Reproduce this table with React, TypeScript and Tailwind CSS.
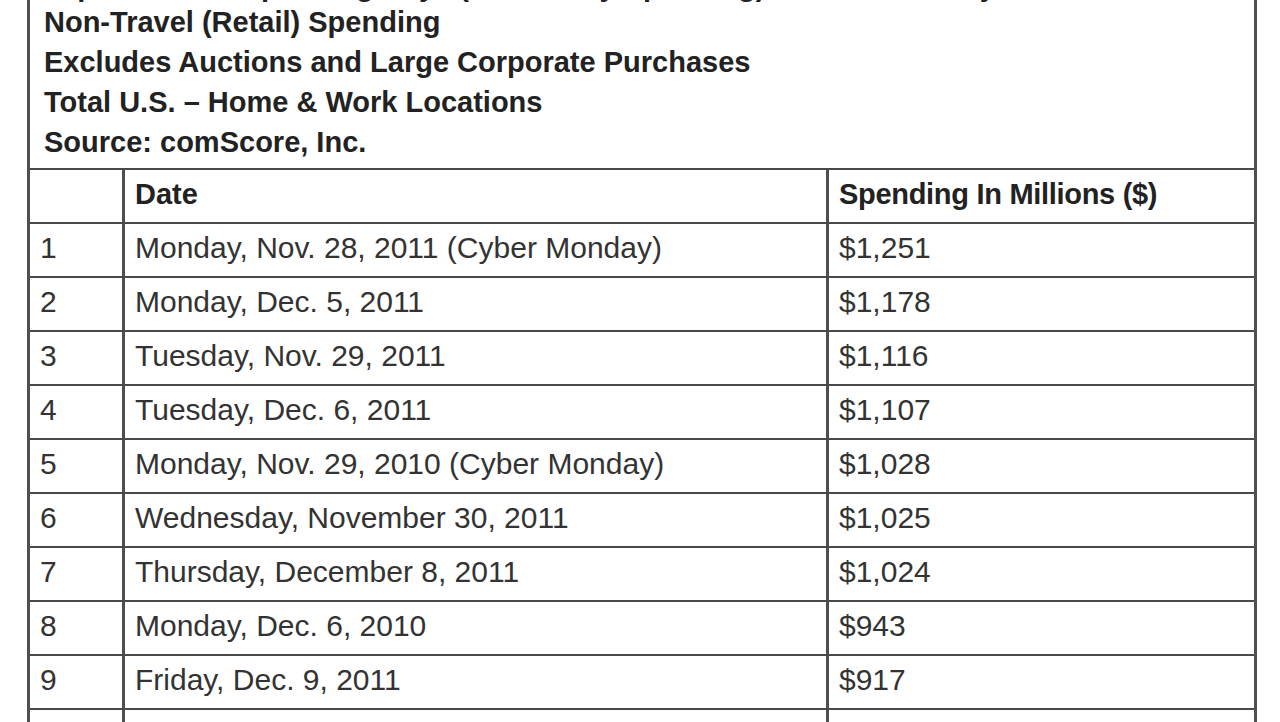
const notes = [
  "Non-Travel (Retail) Spending",
  "Excludes Auctions and Large Corporate Purchases",
  "Total U.S. – Home & Work Locations",
  "Source: comScore, Inc.",
];

const rows = [
  ["1", "Monday, Nov. 28, 2011 (Cyber Monday)", "$1,251"],
  ["2", "Monday, Dec. 5, 2011", "$1,178"],
  ["3", "Tuesday, Nov. 29, 2011", "$1,116"],
  ["4", "Tuesday, Dec. 6, 2011", "$1,107"],
  ["5", "Monday, Nov. 29, 2010 (Cyber Monday)", "$1,028"],
  ["6", "Wednesday, November 30, 2011", "$1,025"],
  ["7", "Thursday, December 8, 2011", "$1,024"],
  ["8", "Monday, Dec. 6, 2010", "$943"],
  ["9", "Friday, Dec. 9, 2011", "$917"],
  ["10", "Thursday, Dec. 1, 2011", "$912"],
];

export default function App() {
  return (
    <div
      className="h-[722px] overflow-hidden bg-white text-[#2a2a2a]"
      style={{ fontFamily: '"Liberation Sans", Arial, sans-serif' }}
    >
      <div className="ml-[27px] w-[1230px] border-x-[3px] border-[#505050]">
        {/* Heading block, first line cut off by the top edge */}
        <div className="pb-[6px] pl-[14px] text-[29px] font-bold text-[#222]">
          <div className="-mt-[28px] whitespace-nowrap leading-[28px]">
            Top 10 Online Spending Days (Ranked by Spending) for 2011 Holiday Season
          </div>
          <div className="mt-[2px] leading-[40px]">
            {notes.map((n) => (
              <div key={n} className="whitespace-nowrap">
                {n}
              </div>
            ))}
          </div>
        </div>

        {/* Table */}
        <div className="grid h-[54px] grid-cols-[92px_704px_1fr] border-t-2 border-[#4a4a4a] text-[29px] font-bold leading-[48px] text-[#222]">
          <div className="pl-[10px]"></div>
          <div className="border-l-[3px] border-[#4f4f4f] pl-[10px]">Date</div>
          <div className="border-l-[3px] border-[#4f4f4f] pl-[10px] tracking-[-0.3px]">
            Spending In Millions ($)
          </div>
        </div>
        {rows.map(([n, d, v]) => (
          <div
            key={n}
            className="grid h-[54px] grid-cols-[92px_704px_1fr] border-t-2 border-[#4a4a4a] text-[30px] leading-[48px] text-[#333]"
          >
            <div className="pl-[10px]">{n}</div>
            <div className="whitespace-nowrap border-l-[3px] border-[#4f4f4f] pl-[10px]">{d}</div>
            <div className="border-l-[3px] border-[#4f4f4f] pl-[10px]">{v}</div>
          </div>
        ))}
      </div>
    </div>
  );
}
